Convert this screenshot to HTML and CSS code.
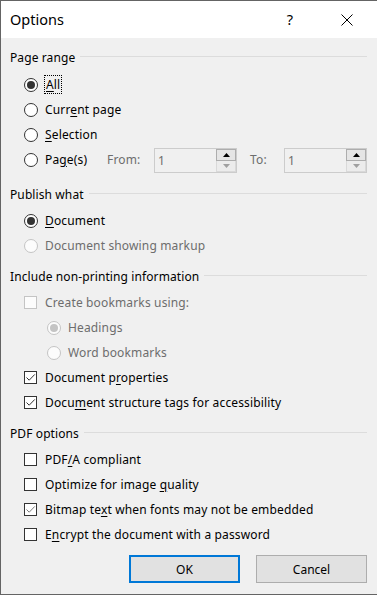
FILE: index.html
```html
<!DOCTYPE html>
<html lang="en">
<head>
    <meta charset="UTF-8">
    <title>Options</title>
    <link rel="stylesheet" href="styles.css">
</head>
<body>
    <div class="window">
        <div class="titlebar">
            <span class="title">Options</span>
            <span class="help">?</span>
            <span class="close">
                <svg width="12" height="12" viewBox="0 0 12 12"><path d="M0.5 0.5 L11.5 11.5 M11.5 0.5 L0.5 11.5" stroke="#000" stroke-width="1" fill="none"/></svg>
            </span>
        </div>
        <div class="content">
            <section class="group first">
                <div class="legend"><span>Page range</span></div>
                <div class="row"><span class="radio checked"></span><span class="label"><span class="focus"><u>A</u>ll</span></span></div>
                <div class="row"><span class="radio"></span><span class="label">Curr<u>e</u>nt page</span></div>
                <div class="row"><span class="radio"></span><span class="label"><u>S</u>election</span></div>
                <div class="row">
                    <span class="radio"></span><span class="label pages">Pa<u>g</u>e(s)</span>
                    <span class="field from">From:</span>
                    <div class="spin">
                        <span class="spin-value">1</span>
                        <div class="spin-btns">
                            <span class="spin-up"><svg width="7" height="4" viewBox="0 0 7 4"><path d="M0 4 L3.5 0 L7 4 Z" fill="#000"/></svg></span>
                            <span class="spin-down"><svg width="7" height="4" viewBox="0 0 7 4"><path d="M0 0 L3.5 4 L7 0 Z" fill="#a0a0a0"/></svg></span>
                        </div>
                    </div>
                    <span class="field to">To:</span>
                    <div class="spin">
                        <span class="spin-value">1</span>
                        <div class="spin-btns">
                            <span class="spin-up"><svg width="7" height="4" viewBox="0 0 7 4"><path d="M0 4 L3.5 0 L7 4 Z" fill="#000"/></svg></span>
                            <span class="spin-down"><svg width="7" height="4" viewBox="0 0 7 4"><path d="M0 0 L3.5 4 L7 0 Z" fill="#a0a0a0"/></svg></span>
                        </div>
                    </div>
                </div>
            </section>

            <section class="group">
                <div class="legend"><span>Publish what</span></div>
                <div class="row"><span class="radio checked"></span><span class="label"><u>D</u>ocument</span></div>
                <div class="row disabled"><span class="radio"></span><span class="label">Document showing markup</span></div>
            </section>

            <section class="group">
                <div class="legend"><span>Include non-printing information</span></div>
                <div class="row disabled"><span class="check"></span><span class="label">Create bookmarks using:</span></div>
                <div class="row disabled indent"><span class="radio checked"></span><span class="label">Headings</span></div>
                <div class="row disabled indent"><span class="radio"></span><span class="label">Word bookmarks</span></div>
                <div class="row"><span class="check"><svg width="13" height="13" viewBox="0 0 13 13"><path d="M2.5 6.5 L5.2 9.2 L10.8 3.4" stroke="#333" stroke-width="1" fill="none"/></svg></span><span class="label">Document p<u>r</u>operties</span></div>
                <div class="row"><span class="check"><svg width="13" height="13" viewBox="0 0 13 13"><path d="M2.5 6.5 L5.2 9.2 L10.8 3.4" stroke="#333" stroke-width="1" fill="none"/></svg></span><span class="label">Docu<u>m</u>ent structure tags for accessibility</span></div>
            </section>

            <section class="group last">
                <div class="legend"><span>PDF options</span></div>
                <div class="row"><span class="check"></span><span class="label">PDF<u>/</u>A compliant</span></div>
                <div class="row"><span class="check"></span><span class="label">Optimize for image <u>q</u>uality</span></div>
                <div class="row"><span class="check"><svg width="13" height="13" viewBox="0 0 13 13"><path d="M2.5 6.5 L5.2 9.2 L10.8 3.4" stroke="#7a7a7a" stroke-width="1" fill="none"/></svg></span><span class="label">Bitmap te<u>x</u>t when fonts may not be embedded</span></div>
                <div class="row"><span class="check"></span><span class="label">E<u>n</u>crypt the document with a password</span></div>
            </section>

            <div class="buttons">
                <button type="button" class="btn default">OK</button>
                <button type="button" class="btn">Cancel</button>
            </div>
        </div>
    </div>
</body>
</html>
```

FILE: styles.css
```css
* {
    margin: 0;
    padding: 0;
    box-sizing: border-box;
}

body {
    font-family: "Noto Sans", "Liberation Sans", Arial, sans-serif;
    font-size: 12px;
    color: #000;
    background: #f0f0f0;
}

.window {
    width: 377px;
    height: 595px;
    border-left: 1px solid #646464;
    border-top: 1px solid #646464;
    border-bottom: 1px solid #646464;
    background: #f0f0f0;
    display: flex;
    flex-direction: column;
}

.titlebar {
    height: 37px;
    background: #fff;
    display: flex;
    align-items: center;
    padding-left: 9px;
}

.title {
    flex: 1;
    font-size: 14.5px;
    padding-bottom: 1px;
}

.help {
    width: 20px;
    text-align: center;
    font-size: 14.5px;
    padding-bottom: 1px;
}

.close {
    display: flex;
    margin-left: 41px;
    margin-right: 24px;
}

.content {
    padding: 11px 10px 0 9px;
    display: flex;
    flex-direction: column;
}

.group {
    margin-bottom: 10px;
}

.group.first {
    margin-bottom: 14px;
}

.group.last {
    margin-bottom: 0;
}

.legend {
    height: 16px;
    display: flex;
    align-items: center;
    gap: 5px;
    margin-bottom: 6px;
    letter-spacing: 0.1px;
}

.group.first .legend {
    margin-bottom: 7px;
}

.legend::after {
    content: '';
    flex: 1;
    height: 1px;
    background: #dcdcdc;
    margin-top: -2px;
}

.row {
    height: 25px;
    display: flex;
    align-items: center;
    padding-left: 14px;
}

.row.indent {
    padding-left: 37px;
}

.label {
    margin-left: 7px;
    white-space: nowrap;
    letter-spacing: 0.15px;
}

.label u,
.focus u {
    text-underline-offset: 2px;
}

.focus {
    outline: 1px dotted #000;
    outline-offset: 0;
    padding: 0 1px;
}

.radio {
    width: 14px;
    height: 14px;
    border: 1px solid #333;
    border-radius: 50%;
    background: #fff;
    display: flex;
    align-items: center;
    justify-content: center;
    flex-shrink: 0;
}

.radio.checked::after {
    content: '';
    width: 8px;
    height: 8px;
    border-radius: 50%;
    background: #333;
}

.check {
    width: 13px;
    height: 13px;
    border: 1px solid #333;
    background: #fff;
    display: flex;
    flex-shrink: 0;
    margin-right: 1px;
}

.check svg {
    margin: -1px;
}

.disabled .label {
    color: #6d6d6d;
}

.disabled .radio,
.disabled .check {
    border-color: #c4c4c4;
    background: #fcfcfc;
}

.disabled .radio.checked::after {
    background: #c4c4c4;
}

.label.pages {
    width: 62px;
}

.field {
    color: #6d6d6d;
    white-space: nowrap;
    letter-spacing: 0.15px;
}

.field.from {
    width: 47px;
}

.field.to {
    width: 34px;
    margin-left: 13px;
}

.spin {
    width: 83px;
    height: 25px;
    border: 1px solid #cccccc;
    display: flex;
    margin-top: 2px;
}

.spin-value {
    flex: 1;
    color: #6d6d6d;
    padding-left: 3px;
    display: flex;
    align-items: center;
    font-size: 12px;
}

.spin-btns {
    width: 20px;
    display: flex;
    flex-direction: column;
}

.spin-up,
.spin-down {
    flex: 1;
    display: flex;
    align-items: center;
    justify-content: center;
}

.spin-up {
    background: #e5e5e5;
    border: 1px solid #adadad;
}

.spin-down {
    background: #ececec;
    border: 1px solid #d9d9d9;
    border-top: none;
}

.buttons {
    display: flex;
    justify-content: flex-end;
    gap: 16px;
    margin-top: 8px;
}

.btn {
    width: 111px;
    height: 28px;
    background: #e1e1e1;
    border: 1px solid #adadad;
    font-family: inherit;
    font-size: 12px;
    color: #000;
}

.btn.default {
    border: 2px solid #0078d7;
}
```
